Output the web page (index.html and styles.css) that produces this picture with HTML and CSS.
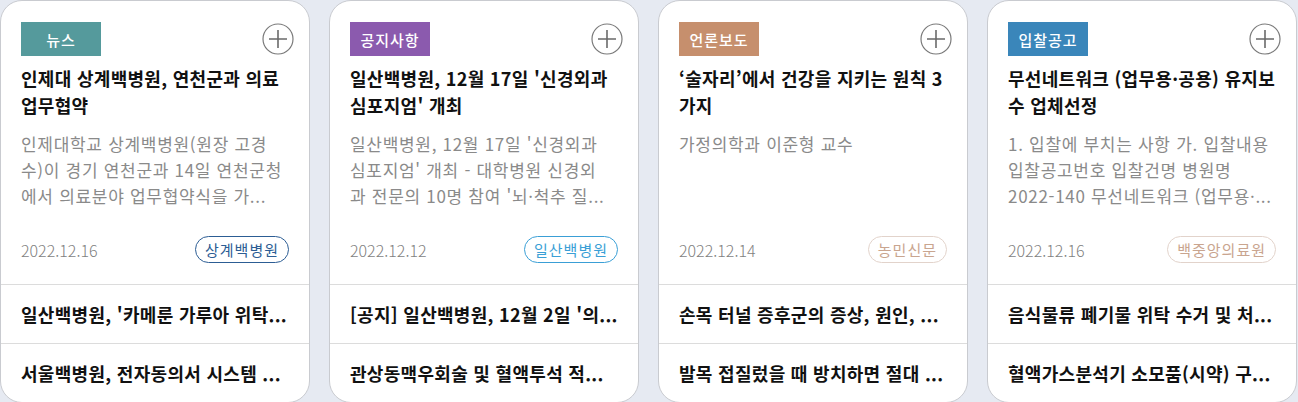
FILE: index.html
```html
<!DOCTYPE html>
<html lang="ko">
<head>
<meta charset="utf-8">
<title>News</title>
<link rel="stylesheet" href="styles.css">
</head>
<body>
<div class="board">
  <section class="card">
    <div class="main">
      <div class="head">
        <span class="badge badge-news">뉴스</span>
        <span class="more"><svg viewBox="0 0 32 32" width="32" height="32"><circle cx="16" cy="16" r="15" fill="none" stroke="#7a7a7a" stroke-width="1.2"/><path d="M7 16H25M16 7V25" stroke="#6a6a6a" stroke-width="1.6"/></svg></span>
      </div>
      <h3 class="title">인제대 상계백병원, 연천군과 의료 업무협약</h3>
      <p class="desc">인제대학교 상계백병원(원장 고경<br>수)이 경기 연천군과 14일 연천군청<br>에서 의료분야 업무협약식을 가...</p>
      <div class="meta">
        <span class="date">2022.12.16</span>
        <span class="tag tag-navy">상계백병원</span>
      </div>
    </div>
    <ul class="list">
      <li>일산백병원, '카메룬 가루아 위탁...</li>
      <li>서울백병원, 전자동의서 시스템 ...</li>
    </ul>
  </section>
  <section class="card">
    <div class="main">
      <div class="head">
        <span class="badge badge-notice">공지사항</span>
        <span class="more"><svg viewBox="0 0 32 32" width="32" height="32"><circle cx="16" cy="16" r="15" fill="none" stroke="#7a7a7a" stroke-width="1.2"/><path d="M7 16H25M16 7V25" stroke="#6a6a6a" stroke-width="1.6"/></svg></span>
      </div>
      <h3 class="title">일산백병원, 12월 17일 '신경외과 심포지엄' 개최</h3>
      <p class="desc">일산백병원, 12월 17일 '신경외과<br>심포지엄' 개최 - 대학병원 신경외<br>과 전문의 10명 참여 '뇌·척추 질...</p>
      <div class="meta">
        <span class="date">2022.12.12</span>
        <span class="tag tag-sky">일산백병원</span>
      </div>
    </div>
    <ul class="list">
      <li>[공지] 일산백병원, 12월 2일 '의...</li>
      <li>관상동맥우회술 및 혈액투석 적...</li>
    </ul>
  </section>
  <section class="card">
    <div class="main">
      <div class="head">
        <span class="badge badge-press">언론보도</span>
        <span class="more"><svg viewBox="0 0 32 32" width="32" height="32"><circle cx="16" cy="16" r="15" fill="none" stroke="#7a7a7a" stroke-width="1.2"/><path d="M7 16H25M16 7V25" stroke="#6a6a6a" stroke-width="1.6"/></svg></span>
      </div>
      <h3 class="title">‘술자리’에서 건강을 지키는 원칙 3가지</h3>
      <p class="desc">가정의학과 이준형 교수</p>
      <div class="meta">
        <span class="date">2022.12.14</span>
        <span class="tag tag-sand">농민신문</span>
      </div>
    </div>
    <ul class="list">
      <li>손목 터널 증후군의 증상, 원인, ...</li>
      <li>발목 접질렀을 때 방치하면 절대 ...</li>
    </ul>
  </section>
  <section class="card">
    <div class="main">
      <div class="head">
        <span class="badge badge-bid">입찰공고</span>
        <span class="more"><svg viewBox="0 0 32 32" width="32" height="32"><circle cx="16" cy="16" r="15" fill="none" stroke="#7a7a7a" stroke-width="1.2"/><path d="M7 16H25M16 7V25" stroke="#6a6a6a" stroke-width="1.6"/></svg></span>
      </div>
      <h3 class="title">무선네트워크 (업무용·공용) 유지보수 업체선정</h3>
      <p class="desc">1. 입찰에 부치는 사항 가. 입찰내용<br>입찰공고번호 입찰건명 병원명<br>2022-140 무선네트워크 (업무용·...</p>
      <div class="meta">
        <span class="date">2022.12.16</span>
        <span class="tag tag-sand">백중앙의료원</span>
      </div>
    </div>
    <ul class="list">
      <li>음식물류 폐기물 위탁 수거 및 처...</li>
      <li>혈액가스분석기 소모품(시약) 구...</li>
    </ul>
  </section>
</div>
</body>
</html>
```

FILE: styles.css
```css
* { box-sizing: border-box; }
html, body { margin: 0; padding: 0; }
body {
  background: #e6eaf2;
  font-family: "Noto Sans CJK KR", "Noto Sans", sans-serif;
  color: #111;
  height: 402px;
  overflow: hidden;
}
.board {
  display: flex;
  gap: 19px;
  width: 1298px;
}
.card {
  flex: 0 0 310px;
  width: 310px;
  height: 403px;
  background: #fff;
  border: 1px solid #c9cbd0;
  border-radius: 22px;
  overflow: hidden;
  display: flex;
  flex-direction: column;
}
.main {
  height: 284px;
  padding: 21px 20px 21px 20px;
  display: flex;
  flex-direction: column;
}
.head {
  display: flex;
  align-items: center;
  justify-content: space-between;
  height: 34px;
}
.badge {
  width: 80px;
  height: 34px;
  display: flex;
  align-items: center;
  justify-content: center;
  color: #fff;
  font-size: 15px;
  font-weight: 500;
  letter-spacing: 1px;
}
.badge-news { background: #559a9c; }
.badge-notice { background: #8b5aae; }
.badge-press { background: #c68f6d; }
.badge-bid { background: #3a86ba; }
.more {
  display: flex;
  width: 32px;
  height: 32px;
  margin-right: -5px;
}
.title {
  margin: 9px 0 0;
  font-size: 18px;
  font-weight: 700;
  line-height: 27px;
  letter-spacing: 0.3px;
  color: #111;
}
.desc {
  margin: 12px 0 0;
  font-size: 17px;
  line-height: 26px;
  color: #8a8a8a;
  white-space: nowrap;
  letter-spacing: 0.7px;
}
.meta {
  margin-top: auto;
  display: flex;
  align-items: center;
  justify-content: space-between;
  height: 27px;
}
.date {
  font-size: 16px;
  font-weight: 300;
  color: #7f7f7f;
  letter-spacing: 0;
}
.tag {
  height: 27px;
  padding: 0 9px;
  border: 1px solid;
  border-radius: 14px;
  font-size: 15px;
  letter-spacing: 1px;
  display: flex;
  align-items: center;
}
.tag-navy { color: #2c5d94; border-color: #2c5d94; }
.tag-sky { color: #3a9fd6; border-color: #3a9fd6; }
.tag-sand { color: #c9a58f; border-color: #e2d3cb; }
.list {
  list-style: none;
  margin: 0;
  padding: 0;
}
.list li {
  height: 59px;
  border-top: 1px solid #dcdcdc;
  padding: 0 20px;
  display: flex;
  align-items: center;
  font-size: 18px;
  font-weight: 700;
  white-space: nowrap;
  overflow: hidden;
  letter-spacing: 0.3px;
}
```
